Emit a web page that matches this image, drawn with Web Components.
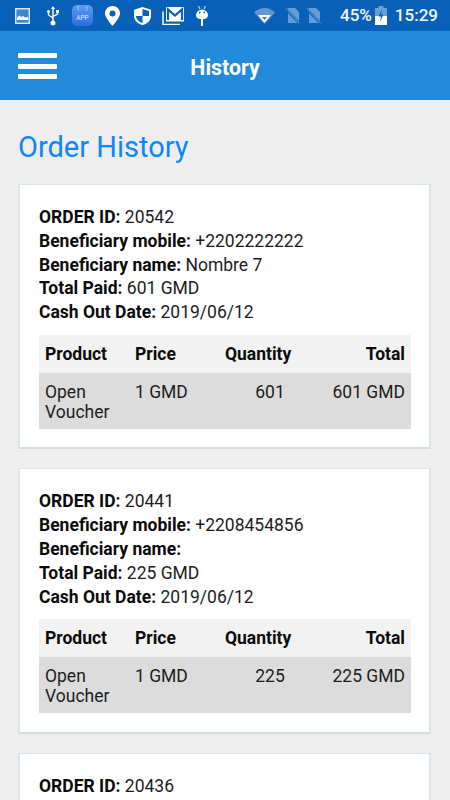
<!DOCTYPE html>
<html>
<head>
<meta charset="utf-8">
<title>History</title>
<style>
  html, body { margin: 0; padding: 0; height: 800px; overflow: hidden; background: #eeeeee; }
  body { font-family: Roboto, "Liberation Sans", sans-serif; color: #111; }
</style>
</head>
<body>
<history-page>
  <status-bar></status-bar>
  <app-bar title="History"></app-bar>
  <page-content heading="Order History">
    <order-card order-id="20542" mobile="+2202222222" name="Nombre 7" paid="601 GMD" date="2019/06/12" qty="601" total="601 GMD"></order-card>
    <order-card order-id="20441" mobile="+2208454856" name="" paid="225 GMD" date="2019/06/12" qty="225" total="225 GMD"></order-card>
    <order-card order-id="20436" partial></order-card>
  </page-content>
</history-page>

<script>
class HistoryPage extends HTMLElement {
  constructor() {
    super();
    this.attachShadow({ mode: 'open' });
    this.shadowRoot.innerHTML = `
      <style>
        :host { display: flex; flex-direction: column; width: 450px; height: 800px; overflow: hidden; }
      </style>
      <slot></slot>
    `;
  }
}

class StatusBar extends HTMLElement {
  constructor() {
    super();
    this.attachShadow({ mode: 'open' });
    this.shadowRoot.innerHTML = `
      <style>
        :host { display: block; flex: none; height: 31px; background: #0860b8; color: #fff; }
        .bar { display: flex; align-items: center; height: 31px; }
        svg { display: block; flex: none; }
        .text { font: 500 17px/33px Roboto, sans-serif; color: #f4f8fc; }
      </style>
      <div class="bar">
        <svg style="margin-left:15px" width="15" height="16" viewBox="0 0 15 16">
          <rect x=".7" y=".7" width="13.6" height="14.6" fill="#3f86cc" stroke="#dbe8f5" stroke-width="1.4"/>
          <path d="M2 12V9.5l2.5-2 2 1.5 1.5-1 2 1.5 3-.5V12z" fill="#fff"/>
        </svg>
        <svg style="margin-left:16px" width="14" height="20" viewBox="0 0 14 20">
          <path d="M7 1v15M7 12L2.500 9V6.500M7 10.500l4.500-2.500V6" fill="none" stroke="#fff" stroke-width="1.400"/>
          <path d="M7 0l2 3H5z" fill="#fff"/>
          <circle cx="2.500" cy="5.500" r="1.500" fill="#fff"/>
          <rect x="10" y="4" width="3" height="3" fill="#fff"/>
          <circle cx="7" cy="17" r="2.500" fill="#fff"/>
        </svg>
        <svg style="margin-left:12px" width="21" height="21" viewBox="0 0 21 21">
          <defs><linearGradient id="appg" x1="0" y1="0" x2="0" y2="1"><stop offset="0" stop-color="#5b9cf0"/><stop offset="1" stop-color="#2a6fe0"/></linearGradient></defs>
          <rect width="21" height="21" rx="5" fill="url(#appg)"/>
          <path d="M6 1v3.500q0 1 1 1M15 1v3.500q0 1-1 1" fill="none" stroke="#bcd6f8" stroke-width=".8"/>
          <text x="10.500" y="15" text-anchor="middle" font-family="Roboto, sans-serif" font-size="6.500" fill="#d9e8fb">APP</text>
        </svg>
        <svg style="margin-left:12px" width="15" height="20" viewBox="0 0 15 20">
          <path fill-rule="evenodd" d="M7.500 0C3.400 0 0 3.200 0 7.300 0 12 7.500 20 7.500 20S15 12 15 7.300C15 3.200 11.600 0 7.500 0zm0 4.500a3 3 0 1 1 0 6 3 3 0 0 1 0-6z" fill="#fff"/>
        </svg>
        <svg style="margin-left:14px" width="17" height="18" viewBox="0 0 17 18">
          <path d="M8.500 0L17 2.800V9c0 4.500-3.500 7.600-8.500 9C3.500 16.600 0 13.500 0 9V2.800z" fill="#fff"/>
          <path d="M8.500 2L15 4v5H8.500zM8.500 9v7C5 14.800 2.200 12.500 2 9z" fill="#0860b8"/>
        </svg>
        <svg style="margin-left:11px" width="22" height="18" viewBox="0 0 22 18">
          <path d="M1 4.500v13h17" fill="none" stroke="#fff" stroke-width="1.500"/>
          <rect x="4" y="0" width="18" height="14.500" fill="#fff"/>
          <path d="M6 13V2.500l7 6 7-6V13" fill="none" stroke="#0860b8" stroke-width="2.200"/>
        </svg>
        <svg style="margin-left:12px" width="12" height="20" viewBox="0 0 12 20">
          <path d="M2.500 0l1.500 3M9.500 0L8 3" stroke="#fff" stroke-width=".9"/>
          <path d="M0 9.500a6 6 0 0 1 12 0V10a4.500 4.500 0 0 1-4.500 3h-3A4.500 4.500 0 0 1 0 10z" fill="#fff"/>
          <rect x="5" y="13" width="2" height="7" fill="#fff"/>
          <circle cx="3.800" cy="6.500" r=".9" fill="#0860b8"/>
          <circle cx="8.200" cy="6.500" r=".9" fill="#0860b8"/>
        </svg>
        <svg style="margin-left:46px" width="21" height="16" viewBox="0 0 21 16">
          <path d="M0 4.500C3 1.500 6.500 0 10.500 0S18 1.500 21 4.500L10.500 16z" fill="#fff" fill-opacity=".35"/>
          <path d="M4 7h13l-6.500 8z" fill="#fff"/>
          <path d="M8 9h5l-2.500 3z" fill="#2f7ac6"/>
        </svg>
        <svg style="margin-left:10px" width="15" height="18" viewBox="0 0 15 18">
          <path d="M3 1h7l4 4v11H3z" fill="#fff" fill-opacity=".38"/>
          <path d="M0 1l15 16" stroke="#0860b8" stroke-width="2.400"/>
          <path d="M.5 .5l14 16" stroke="#fff" stroke-opacity=".38" stroke-width="1"/>
        </svg>
        <svg style="margin-left:6px" width="15" height="18" viewBox="0 0 15 18">
          <path d="M3 1h7l4 4v11H3z" fill="#fff" fill-opacity=".38"/>
          <path d="M0 1l15 16" stroke="#0860b8" stroke-width="2.400"/>
          <path d="M.5 .5l14 16" stroke="#fff" stroke-opacity=".38" stroke-width="1"/>
        </svg>
        <span class="text" style="margin-left:19px">45%</span>
        <svg style="margin-left:3px" width="12" height="19" viewBox="0 0 12 19">
          <path d="M3.500 0h5v2H12v17H0V2h3.500z" fill="#fff" fill-opacity=".4"/>
          <path d="M0 10h12v9H0z" fill="#fff"/>
          <path d="M7 3L3.500 10.500H6l-1 5.500 3.500-7.500H6z" fill="#0860b8"/>
        </svg>
        <span class="text" style="margin-left:8px">15:29</span>
      </div>
    `;
  }
}

class AppBar extends HTMLElement {
  constructor() {
    super();
    this.attachShadow({ mode: 'open' });
    this.shadowRoot.innerHTML = `
      <style>
        :host { display: block; flex: none; height: 69px; background: #228adb; color: #fff; }
        .bar { position: relative; display: flex; align-items: center; justify-content: center; height: 100%; box-sizing: border-box; padding-top: 5px; }
        .menu { position: absolute; left: 18px; top: 22px; display: flex; flex-direction: column; gap: 5.500px; }
        .menu i { display: block; width: 39px; height: 5px; background: #fff; border-radius: 1px; }
        h1 { margin: 0; font: 700 21.300px/24px Roboto, sans-serif; }
      </style>
      <div class="bar">
        <div class="menu"><i></i><i></i><i></i></div>
        <h1>${this.getAttribute('title')}</h1>
      </div>
    `;
  }
}

class PageContent extends HTMLElement {
  constructor() {
    super();
    this.attachShadow({ mode: 'open' });
    this.shadowRoot.innerHTML = `
      <style>
        :host { display: block; flex: 1; padding: 29px 19px 0 18px; background: #eeeeee; }
        h2 { margin: 0 0 19px 0; font: 400 29px/36px Roboto, sans-serif; color: #0d86fb; }
        .list { display: flex; flex-direction: column; gap: 19px; }
      </style>
      <h2>${this.getAttribute('heading')}</h2>
      <div class="list"><slot></slot></div>
    `;
  }
}

class OrderCard extends HTMLElement {
  constructor() {
    super();
    this.attachShadow({ mode: 'open' });
    const get = (n) => this.getAttribute(n) || '';
    const details = this.hasAttribute('partial') ? '' : `
        <div><b>Beneficiary mobile:</b> ${get('mobile')}</div>
        <div><b>Beneficiary name:</b> ${get('name')}</div>
        <div><b>Total Paid:</b> ${get('paid')}</div>
        <div><b>Cash Out Date:</b> ${get('date')}</div>`;
    const table = this.hasAttribute('partial') ? '' : `
      <table>
        <colgroup><col class="a"><col class="b"><col class="c"><col></colgroup>
        <tr class="head"><th>Product</th><th>Price</th><th>Quantity</th><th class="total">Total</th></tr>
        <tr class="row"><td>Open Voucher</td><td>1 GMD</td><td class="val">${get('qty')}</td><td class="total">${get('total')}</td></tr>
      </table>`;
    this.shadowRoot.innerHTML = `
      <style>
        :host { display: block; box-sizing: border-box; background: #fff; padding: 21px 20px 18.500px 19px;
          border: 1px solid #dde5ec; border-bottom-color: #d3dbe3; border-width: 1px 2px 2px 2px; font: 400 17.500px/23.800px Roboto, sans-serif; color: #1d1d1d; }
        b { font-weight: 700; color: #0b0b0b; }
        table { width: 372px; margin-top: 10px; border-collapse: collapse; table-layout: fixed; }
        th, td { padding: 0 6px; font-size: 17.500px; vertical-align: top; text-align: left; }
        th { height: 38px; line-height: 38px; font-weight: 700; color: #0b0b0b; }
        td { height: 56px; padding-top: 9px; padding-bottom: 7px; line-height: 20px; box-sizing: border-box; }
        .head { background: #f2f2f2; }
        .row { background: #dcdcdc; }
        .val { padding-left: 30px; text-align: center; }
        .total { text-align: right; }
        col.a { width: 90px; } col.b { width: 90px; } col.c { width: 78px; }
      </style>
      <div><b>ORDER ID:</b> ${get('order-id')}</div>${details}${table}
    `;
  }
}

customElements.define('history-page', HistoryPage);
customElements.define('status-bar', StatusBar);
customElements.define('app-bar', AppBar);
customElements.define('page-content', PageContent);
customElements.define('order-card', OrderCard);
</script>
</body>
</html>
